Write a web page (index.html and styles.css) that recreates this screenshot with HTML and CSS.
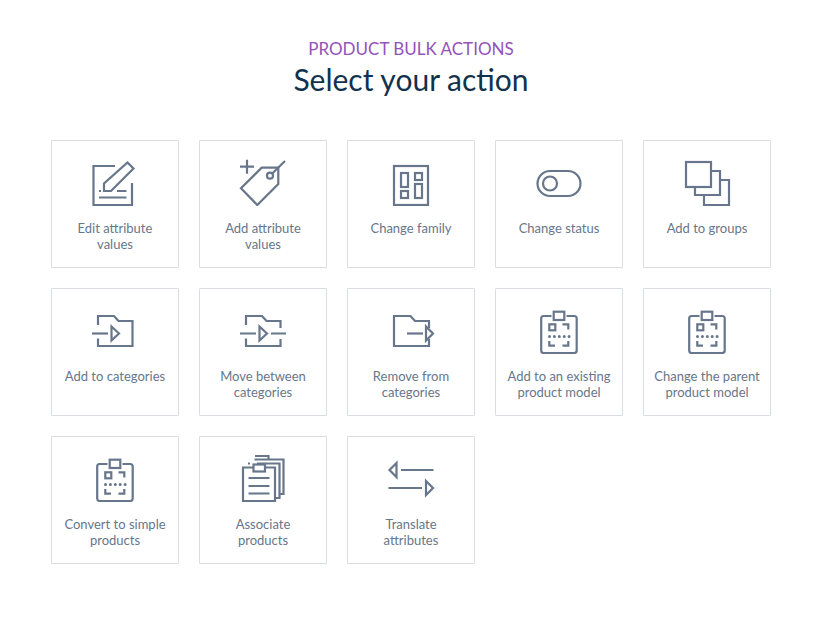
FILE: index.html
```html
<!DOCTYPE html>
<html lang="en">
<head>
    <meta charset="UTF-8">
    <title>Product bulk actions</title>
    <link rel="stylesheet" href="styles.css">
</head>
<body>
    <svg class="defs" width="0" height="0">
        <symbol id="icon-model" viewBox="0 0 48 48">
            <path d="M16.500 10H8.700Q6.200 10 6.200 12.500V44.500Q6.200 47 8.700 47H39.200Q41.700 47 41.700 44.500V12.500Q41.700 10 39.200 10H31.500"/>
            <rect x="18.700" y="5.700" width="10.600" height="8.300"/>
            <rect x="14.300" y="18.300" width="6" height="6"/>
            <path d="M27.500 18.300H33.300V23.500M14.300 35V39.700H20M33.300 35V39.700H27.500"/>
            <path class="dots" d="M14.500 30.500H35"/>
        </symbol>
    </svg>
    <div class="container">
        <div class="header">
            <div class="subtitle">PRODUCT BULK ACTIONS</div>
            <h1>Select your action</h1>
        </div>
        <div class="actions">
            <div class="action">
                <svg class="icon" viewBox="0 0 48 48">
                    <path d="M24 8H2.500V47H41V25"/>
                    <path d="M13 33V25.500L36.500 4.500L42.500 10.500L20 33Z"/>
                    <path d="M8 33H10M26 33H35.500M8 39.500H35.500"/>
                </svg>
                <span>Edit attribute values</span>
            </div>
            <div class="action">
                <svg class="icon" viewBox="0 0 48 48">
                    <path d="M1 8.700H15M8 1.700V15.700"/>
                    <path d="M22.700 9.700H39.300V26L18.300 47L2 30.300Z"/>
                    <circle cx="31" cy="17.700" r="3"/>
                    <path d="M33.200 15.500L46 3"/>
                </svg>
                <span>Add attribute values</span>
            </div>
            <div class="action">
                <svg class="icon" viewBox="0 0 48 48">
                    <rect x="7" y="8" width="34" height="39"/>
                    <rect x="14" y="15" width="7" height="14"/>
                    <rect x="28" y="15" width="7" height="7"/>
                    <rect x="14" y="33" width="7" height="7"/>
                    <rect x="28" y="26" width="7" height="14"/>
                </svg>
                <span>Change family</span>
            </div>
            <div class="action">
                <svg class="icon" viewBox="0 0 48 48">
                    <rect x="2.500" y="13" width="43" height="25" rx="12.500"/>
                    <circle cx="15" cy="25.500" r="7"/>
                </svg>
                <span>Change status</span>
            </div>
            <div class="action">
                <svg class="icon" viewBox="0 0 48 48">
                    <rect x="3" y="4" width="25" height="25"/>
                    <path d="M28 13H37V37H12V29"/>
                    <path d="M37 22H46V47H21V37"/>
                </svg>
                <span>Add to groups</span>
            </div>
            <div class="action">
                <svg class="icon" viewBox="0 0 48 48">
                    <path d="M7 19V10H23L27.500 15H41.500V40H7V32.500"/>
                    <path d="M1 27.500H17"/>
                    <path d="M20.500 20.500L28 27.500L20.500 34.500Z"/>
                </svg>
                <span>Add to categories</span>
            </div>
            <div class="action">
                <svg class="icon" viewBox="0 0 48 48">
                    <path d="M7 19V10H23L27.500 15H41.500V22M41.500 33V40H7V32.500"/>
                    <path d="M1 27.500H17M32 27.500H47"/>
                    <path d="M20.500 20.500L28 27.500L20.500 34.500Z"/>
                </svg>
                <span>Move between categories</span>
            </div>
            <div class="action">
                <svg class="icon" viewBox="0 0 48 48">
                    <path d="M42 22V15H28L23.500 10H7V40H42V33"/>
                    <path d="M20 27.500H36"/>
                    <path d="M39 20.500L46 27.500L39 34.500Z"/>
                </svg>
                <span>Remove from categories</span>
            </div>
            <div class="action">
                <svg class="icon"><use href="#icon-model"/></svg>
                <span>Add to an existing product model</span>
            </div>
            <div class="action">
                <svg class="icon"><use href="#icon-model"/></svg>
                <span>Change the parent product model</span>
            </div>
            <div class="action">
                <svg class="icon"><use href="#icon-model"/></svg>
                <span>Convert to simple products</span>
            </div>
            <div class="action">
                <svg class="icon" viewBox="0 0 48 48">
                    <path d="M14 13.500H4V47H36V13.500H26"/>
                    <rect x="14.500" y="10.500" width="11.500" height="7"/>
                    <path d="M9.500 24H30.500M9.500 32H30.500M9.500 39.500H30.500"/>
                    <path d="M18 9.500H40.500V44H36M9 9.500H11"/>
                    <path d="M15.500 5.500H44.500V40H40.500"/>
                    <path d="M16 2H29.500V5.500"/>
                </svg>
                <span>Associate products</span>
            </div>
            <div class="action">
                <svg class="icon" viewBox="0 0 48 48">
                    <path d="M9.500 9L2.500 16L9.500 23ZM14 16H46.500"/>
                    <path d="M1.500 34H35M39 27L46 34L39 41Z"/>
                </svg>
                <span>Translate attributes</span>
            </div>
        </div>
    </div>
</body>
</html>
```
FILE: styles.css
```css
body {
    margin: 0;
    background: #fff;
    font-family: 'Lato', sans-serif;
}
.defs {
    display: block;
    height: 0;
}
.container {
    width: 720px;
    margin-left: 51px;
    padding-top: 38px;
}
.header {
    text-align: center;
    margin-bottom: 41px;
}
.subtitle {
    font-size: 17px;
    line-height: 21px;
    color: #9452ba;
}
h1 {
    margin: 0;
    font-size: 30px;
    line-height: 40px;
    font-weight: 400;
    color: #11324d;
}
.actions {
    display: grid;
    grid-template-columns: repeat(5, 128px);
    grid-auto-rows: 128px;
    gap: 20px;
}
.action {
    box-sizing: border-box;
    border: 1px solid #d9dde2;
    border-radius: 1px;
    padding: 17px 9.500px 0;
    text-align: center;
    font-size: 13px;
    line-height: 16px;
    color: #67768a;
}
.action span {
    display: block;
}
.icon {
    display: block;
    width: 48px;
    height: 48px;
    margin: 0 auto 14px;
    fill: none;
    stroke: #67768a;
    stroke-width: 2.200;
}
.dots {
    stroke-width: 3;
    stroke-dasharray: 0 4.900;
    stroke-linecap: round;
}
```
